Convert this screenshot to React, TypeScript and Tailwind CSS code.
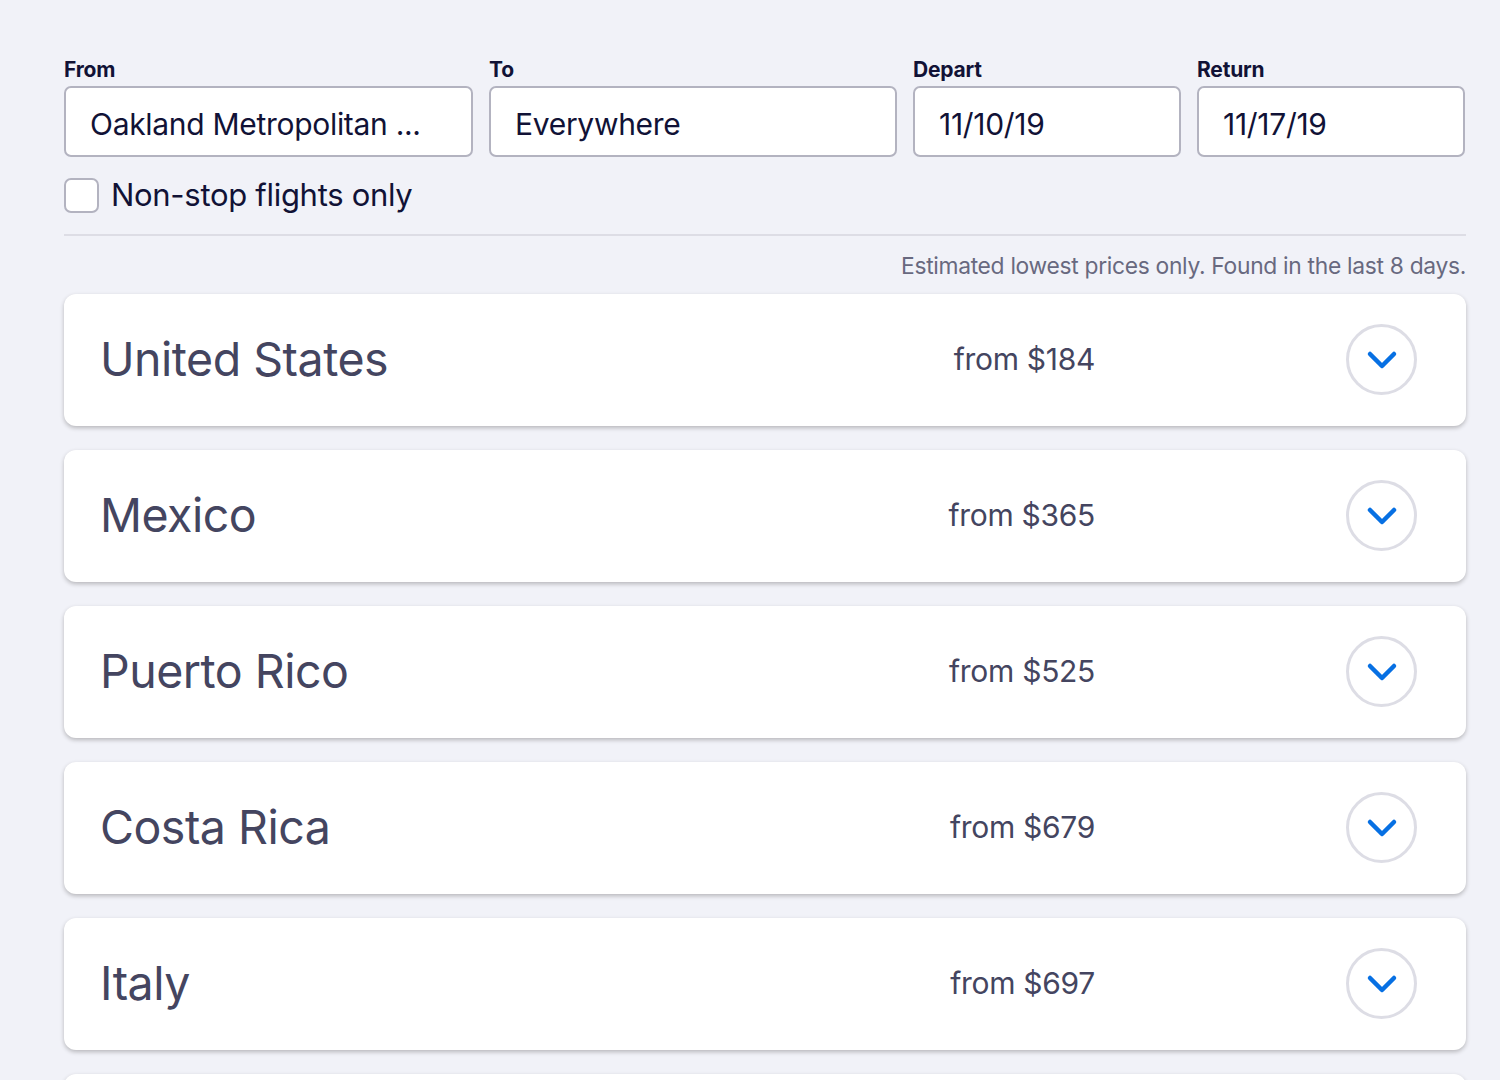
import React from 'react';

const fields = [
  { label: 'From', value: 'Oakland Metropolitan ...' },
  { label: 'To', value: 'Everywhere' },
  { label: 'Depart', value: '11/10/19' },
  { label: 'Return', value: '11/17/19' },
];

const results = [
  { country: 'United States', price: 184 },
  { country: 'Mexico', price: 365 },
  { country: 'Puerto Rico', price: 525 },
  { country: 'Costa Rica', price: 679 },
  { country: 'Italy', price: 697 },
  { country: 'Japan', price: 712 },
];

export default function App() {
  return (
    <div
      className="min-h-screen bg-[#f1f2f8] text-[#111236]"
      style={{ fontFamily: 'Inter, "Noto Sans", sans-serif' }}
    >
      <div className="ml-[64px] w-[1402px] pt-[54px]">
        <div className="grid grid-cols-[409px_408px_268px_268px] gap-4">
          {fields.map((f) => (
            <div key={f.label} className="flex flex-col">
              <label className="text-[21px] font-bold leading-[32px] tracking-[-0.2px]">{f.label}</label>
              <div className="flex h-[71px] items-center rounded-[7px] border-2 border-[#b3b3c0] bg-white px-6 pt-[6px] text-[30px] tracking-[-0.3px]">
                {f.value}
              </div>
            </div>
          ))}
        </div>

        <label className="mt-[15px] flex items-center gap-3">
          <span className="h-[35px] w-[35px] rounded-[7px] border-2 border-[#b3b3c0] bg-white" />
          <span className="text-[31px] tracking-[-0.3px]">Non-stop flights only</span>
        </label>

        <div className="mt-[15px] border-t-2 border-[#dddde5]" />

        <p className="mt-[14px] text-right text-[22.8px] leading-[32px] tracking-[-0.3px] text-[#68697f]">
          Estimated lowest prices only. Found in the last 8 days.
        </p>

        <div className="mt-[12px] flex flex-col gap-6">
          {results.map((r) => (
            <div
              key={r.country}
              className="flex h-[132px] items-center rounded-[12px] bg-white pl-9 pr-[49px] shadow-[0_2px_4px_rgba(37,32,31,0.28)]"
            >
              <span className="flex-1 text-[46.5px] tracking-[-0.5px] text-[#444560]">{r.country}</span>
              <span className="w-[400px] text-right text-[30px] tracking-[-0.3px] text-[#444560]">from ${r.price}</span>
              <button className="ml-[251px] flex h-[71px] w-[71px] items-center justify-center rounded-full border-[3px] border-[#dddde5] bg-white">
                <svg width="32" height="20" viewBox="0 0 32 20" fill="none">
                  <path d="M4 4l12 12L28 4" stroke="#0770e3" strokeWidth="4.5" strokeLinecap="round" strokeLinejoin="round" />
                </svg>
              </button>
            </div>
          ))}
        </div>
      </div>
    </div>
  );
}
